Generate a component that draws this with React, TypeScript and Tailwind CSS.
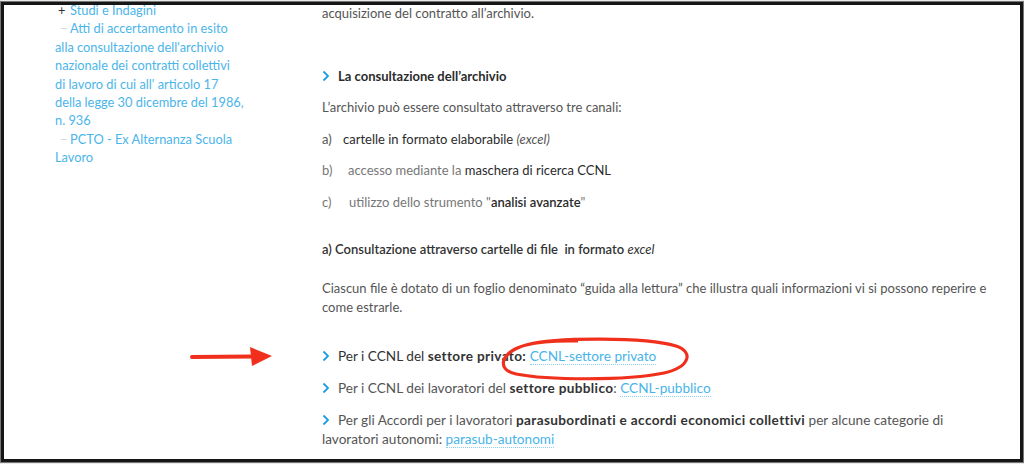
import React from "react";

const font = { fontFamily: "Lato, 'Open Sans', sans-serif" };

function Chevron() {
  return (
    <svg width="8" height="12" viewBox="0 0 8 12" className="mr-[8px] inline-block shrink-0 align-[-1px]">
      <path d="M1.5 1.5 L6 6 L1.5 10.5" fill="none" stroke="#1a9ee4" strokeWidth="1.8" />
    </svg>
  );
}

const link = "text-[#48b4ea] border-b border-dotted border-[#8fd0f2]";
const strong = "font-bold tracking-[0.35px] text-[#333]";

export default function App() {
  return (
    <div className="h-[464px] w-[1024px] overflow-hidden bg-white" style={font}>
      <div className="relative ml-[1px] mt-[2px] h-[460px] w-[1022px] overflow-hidden border-[3px] border-[#161616] shadow-[0_0_1px_1px_#777]">
        <div className="flex">
          {/* sidebar */}
          <div className="-mt-[4px] w-[271px] shrink-0 pl-[51px] text-[12.8px] leading-[18.4px] text-[#4bb5ea]">
            <div className="flex">
              <span className="w-[15px] pl-[3px] text-[#333]">+</span>
              <span>Studi e Indagini</span>
            </div>
            <div>
              <span className="inline-block w-[15px] pl-[5px] text-[#d5d5d5]">–</span>
              Atti di accertamento in esito
              <br />
              alla consultazione dell'archivio
              <br />
              nazionale dei contratti collettivi
              <br />
              di lavoro di cui all' articolo 17
              <br />
              della legge 30 dicembre del 1986,
              <br />
              n. 936
            </div>
            <div>
              <span className="inline-block w-[15px] pl-[5px] text-[#d5d5d5]">–</span>
              PCTO - Ex Alternanza Scuola
              <br />
              Lavoro
            </div>
          </div>

          {/* main */}
          <div className="-mt-[1.5px] w-[740px] pl-[47px] text-[13px] leading-[19px] text-[#555]">
            <p>acquisizione del contratto all’archivio.</p>

            <p className="mt-[44px] flex items-center font-bold text-[#2b2b2b]">
              <Chevron />
              La consultazione dell’archivio
            </p>

            <p className="mt-[12px]">L’archivio può essere consultato attraverso tre canali:</p>

            <p className="mt-[13px] flex">
              <span className="w-[21px]">a)</span>
              <span className="text-[#2b2b2b]">
                cartelle in formato elaborabile <i className="text-[#555]">(excel)</i>
              </span>
            </p>
            <p className="mt-[12px] flex text-[#777]">
              <span className="w-[26px]">b)</span>
              <span>
                accesso mediante la <span className="text-[#2b2b2b]">maschera di ricerca CCNL</span>
              </span>
            </p>
            <p className="mt-[13px] flex text-[#777]">
              <span className="w-[27px]">c)</span>
              <span>
                utilizzo dello strumento "<span className="font-semibold text-[#2b2b2b]">analisi avanzate</span>"
              </span>
            </p>

            <p className="mt-[28px] font-semibold text-[#333]">
              a) Consultazione attraverso cartelle di file&nbsp; in formato <i className="font-normal">excel</i>
            </p>

            <p className="mt-[20px]">
              Ciascun file è dotato di un foglio denominato “guida alla lettura” che illustra quali informazioni vi si
              possono reperire e
              <br />
              come estrarle.
            </p>

            <div className="text-[13.6px]">
              <p className="mt-[30px] flex items-center text-[#333]">
                <Chevron />
                <span>
                  Per i CCNL del <b className={strong}>settore privato:</b>{" "}
                  <span className={link}>CCNL-settore privato</span>
                </span>
              </p>
              <p className="mt-[13px] flex items-center">
                <Chevron />
                <span>
                  Per i CCNL dei lavoratori del <b className={strong}>settore pubblico</b>:{" "}
                  <span className={link}>CCNL-pubblico</span>
                </span>
              </p>
              <p className="mt-[13px]">
                <Chevron />
                Per gli Accordi per i lavoratori{" "}
                <b className={strong}>parasubordinati e accordi economici collettivi</b> per alcune categorie di
                <br />
                lavoratori autonomi: <span className={link}>parasub-autonomi</span>
              </p>
            </div>
          </div>
        </div>

        {/* red annotations */}
        <svg className="absolute left-[186px] top-[340px]" width="86" height="24" viewBox="0 0 86 24">
          <path d="M2 12 L62 11.5" stroke="#f0301c" strokeWidth="4" strokeLinecap="round" />
          <path d="M60 2 L82 11 L62 21 Z" fill="#f0301c" />
        </svg>
        <svg className="absolute left-[492px] top-[331px]" width="196" height="46" viewBox="0 0 196 46">
          <path
            d="M30 9 C60 1 150 1 180 10 C198 16 194 31 168 37 C130 45 50 44 20 38 C0 34 4 16 30 9 C50 4 70 5 82 5"
            fill="none"
            stroke="#f0301c"
            strokeWidth="3.2"
          />
        </svg>
      </div>
    </div>
  );
}
